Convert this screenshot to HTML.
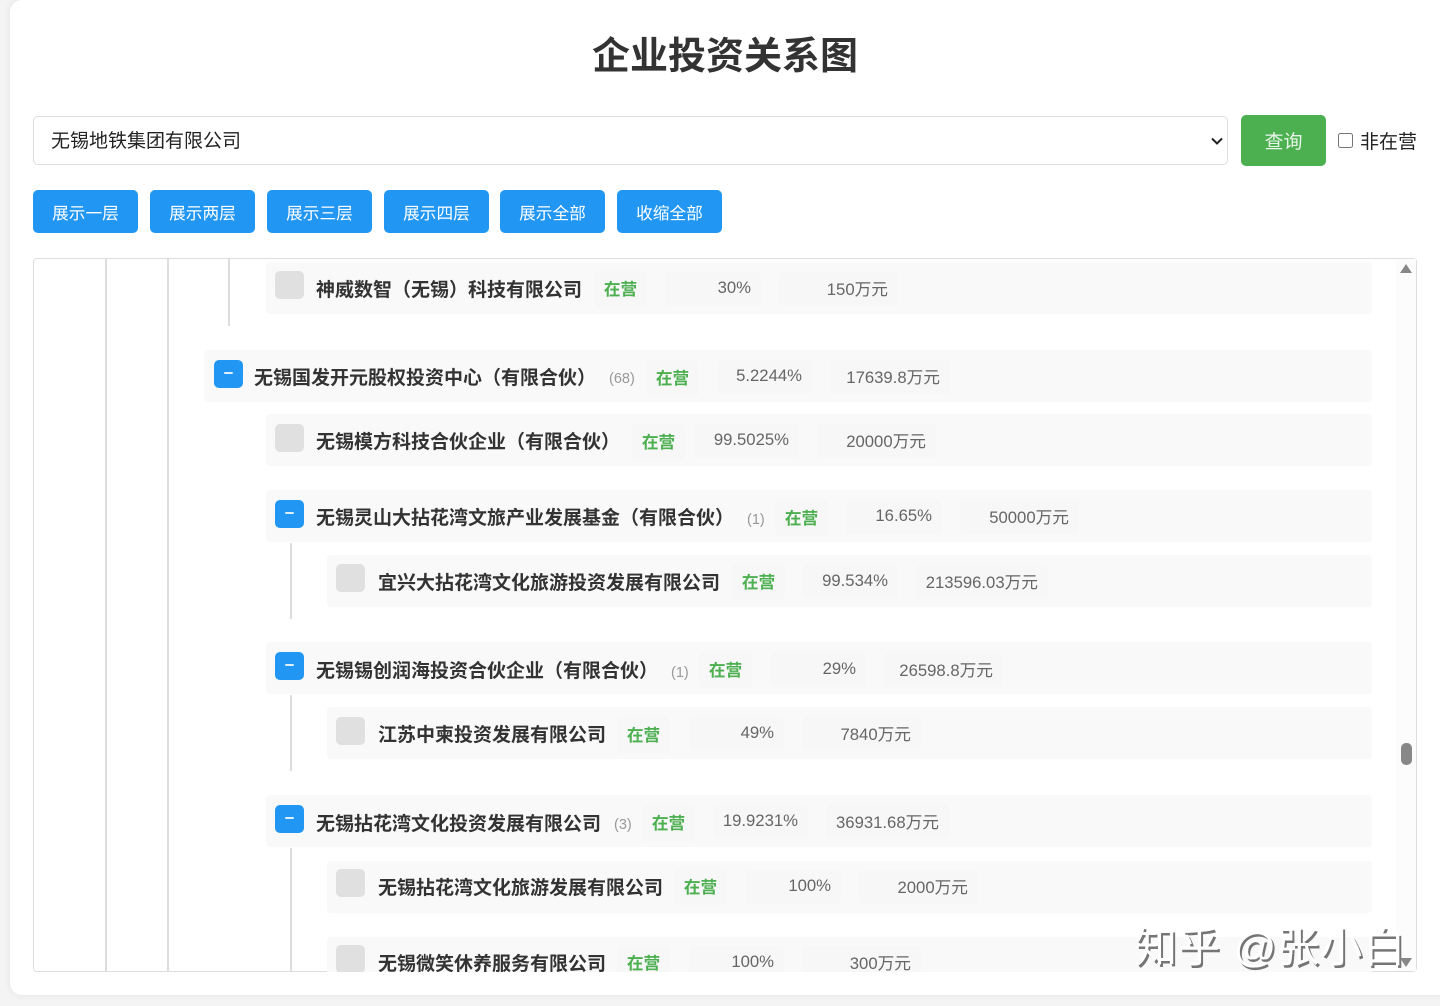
<!DOCTYPE html>
<html lang="zh-CN"><head><meta charset="utf-8"><title>企业投资关系图</title>
<style>
*{box-sizing:border-box}
html,body{margin:0;padding:0;width:1440px;height:1006px;overflow:hidden;background:#f4f4f4;font-family:"Liberation Sans","Noto Sans CJK SC",sans-serif}
.card{position:absolute;left:10px;top:0;width:1440px;height:995px;background:#fff;border-radius:12px;box-shadow:0 0 8px rgba(0,0,0,.08)}
.abs{position:absolute;white-space:nowrap}
h1{position:absolute;left:425px;width:600px;top:32px;margin:0;text-align:center;font-size:38px;line-height:50px;font-weight:700;color:#333}
select{position:absolute;left:33px;top:116px;width:1195px;height:49px;border:1px solid #ddd;border-radius:5px;background:#fff;font:19px "Liberation Sans","Noto Sans CJK SC",sans-serif;color:#222;padding:2px 17px 0;appearance:none;-webkit-appearance:none}
.go{left:1241px;top:115px;width:85px;height:51px;background:#4caf50;color:#e8f5e9;border-radius:5px;text-align:center;font-size:19px;line-height:56px}
.btn{top:190px;width:105px;height:43px;background:#2196f3;color:#fff;border-radius:5px;text-align:center;font-size:16.7px;line-height:47px}
.box{position:absolute;left:33px;top:258px;width:1384px;height:714px;border:1px solid #ddd;border-radius:4px}
.sb{position:absolute;left:1396px;top:259px;width:20px;height:712px;background:#fcfcfc}
.tree{position:absolute;left:0;top:0;width:1440px;height:1006px;clip-path:inset(259px 44px 34px 34px)}
.v{position:absolute;width:2px;background:#ddd}
.bar{position:absolute;height:52px;right:68px;background:#f9f9f9;border-radius:4px}
.ic{position:absolute;width:29px;height:28px;border-radius:5px;background:#e0e0e0}
.ic.b{background:#2196f3}
.ic.b i{position:absolute;left:10px;top:12px;width:9px;height:2px;background:#dff0fd;border-radius:1px}
.n{position:absolute;white-space:nowrap;font-size:19px;font-weight:700;color:#333;line-height:26px;margin-top:2px}
.c{position:absolute;white-space:nowrap;font-size:14.5px;color:#999;line-height:20px}
.s{position:absolute;height:36px;width:53px;background:#f7f7f7;border-radius:4px;color:#4caf50;font-weight:700;font-size:16.7px;line-height:38px;text-align:center}
.p,.m{position:absolute;height:34px;background:#f7f7f7;border-radius:4px;color:#666;font-size:16.7px;text-align:right;padding-right:10px;white-space:nowrap}
.p{line-height:31px}.m{line-height:36px}
.wm{left:1135px;top:918px;font-size:42px;line-height:60px;color:#fff;text-shadow:2px 2.5px 0 #757575;letter-spacing:1px}
</style></head><body>
<div class="card"></div>
<h1>企业投资关系图</h1>
<select><option>无锡地铁集团有限公司</option></select>
<svg class="abs" style="left:1210px;top:136px" width="14" height="10"><path d="M2 2.5 L7 7.5 L12 2.5" fill="none" stroke="#222" stroke-width="2"/></svg>
<div class="abs go">查询</div>
<input type="checkbox" style="position:absolute;left:1338px;top:133px;width:15px;height:15px;margin:0">
<div class="abs" style="left:1360px;top:129px;font-size:19px;line-height:28px;color:#222">非在营</div>
<div class="abs btn" style="left:33px">展示一层</div>
<div class="abs btn" style="left:150px">展示两层</div>
<div class="abs btn" style="left:267px">展示三层</div>
<div class="abs btn" style="left:384px">展示四层</div>
<div class="abs btn" style="left:500px">展示全部</div>
<div class="abs btn" style="left:617px">收缩全部</div>
<div class="box"></div>
<div class="sb"></div>
<div class="tree">
<div class="v" style="left:105px;top:258px;height:714px"></div>
<div class="v" style="left:167px;top:258px;height:714px"></div>
<div class="v" style="left:228px;top:258px;height:68px"></div>
<div class="v" style="left:290px;top:543px;height:76px"></div>
<div class="v" style="left:290px;top:695px;height:76px"></div>
<div class="v" style="left:290px;top:848px;height:124px"></div>

<div class="bar" style="left:266px;top:262px"></div>
<div class="ic" style="left:275px;top:271px"></div>
<div class="n" style="left:316px;top:276px">神威数智（无锡）科技有限公司</div>
<div class="s" style="left:594px;top:271px">在营</div>
<div class="p" style="left:665px;top:272px;width:96px">30%</div>
<div class="m" style="left:779px;top:272px;width:119px">150万元</div>

<div class="bar" style="left:204px;top:350px"></div>
<div class="ic b" style="left:214px;top:360px"><i></i></div>
<div class="n" style="left:254px;top:364px">无锡国发开元股权投资中心（有限合伙）</div>
<div class="c" style="left:609px;top:369px">(68)</div>
<div class="s" style="left:646px;top:360px">在营</div>
<div class="p" style="left:717px;top:360px;width:95px">5.2244%</div>
<div class="m" style="left:830px;top:360px;width:120px">17639.8万元</div>

<div class="bar" style="left:266px;top:414px"></div>
<div class="ic" style="left:275px;top:424px"></div>
<div class="n" style="left:316px;top:428px">无锡模方科技合伙企业（有限合伙）</div>
<div class="s" style="left:632px;top:424px">在营</div>
<div class="p" style="left:694px;top:424px;width:105px">99.5025%</div>
<div class="m" style="left:817px;top:424px;width:119px">20000万元</div>

<div class="bar" style="left:266px;top:490px"></div>
<div class="ic b" style="left:275px;top:500px"><i></i></div>
<div class="n" style="left:316px;top:504px">无锡灵山大拈花湾文旅产业发展基金（有限合伙）</div>
<div class="c" style="left:747px;top:510px">(1)</div>
<div class="s" style="left:775px;top:500px">在营</div>
<div class="p" style="left:846px;top:500px;width:96px">16.65%</div>
<div class="m" style="left:960px;top:500px;width:119px">50000万元</div>

<div class="bar" style="left:327px;top:555px"></div>
<div class="ic" style="left:336px;top:564px"></div>
<div class="n" style="left:378px;top:569px">宜兴大拈花湾文化旅游投资发展有限公司</div>
<div class="s" style="left:732px;top:564px">在营</div>
<div class="p" style="left:803px;top:565px;width:95px">99.534%</div>
<div class="m" style="left:916px;top:565px;width:132px">213596.03万元</div>

<div class="bar" style="left:266px;top:642px"></div>
<div class="ic b" style="left:275px;top:652px"><i></i></div>
<div class="n" style="left:316px;top:657px">无锡锡创润海投资合伙企业（有限合伙）</div>
<div class="c" style="left:671px;top:663px">(1)</div>
<div class="s" style="left:699px;top:652px">在营</div>
<div class="p" style="left:771px;top:653px;width:95px">29%</div>
<div class="m" style="left:884px;top:653px;width:119px">26598.8万元</div>

<div class="bar" style="left:327px;top:707px"></div>
<div class="ic" style="left:336px;top:717px"></div>
<div class="n" style="left:378px;top:721px">江苏中柬投资发展有限公司</div>
<div class="s" style="left:617px;top:717px">在营</div>
<div class="p" style="left:689px;top:717px;width:95px">49%</div>
<div class="m" style="left:802px;top:717px;width:119px">7840万元</div>

<div class="bar" style="left:266px;top:795px"></div>
<div class="ic b" style="left:275px;top:805px"><i></i></div>
<div class="n" style="left:316px;top:810px">无锡拈花湾文化投资发展有限公司</div>
<div class="c" style="left:614px;top:815px">(3)</div>
<div class="s" style="left:642px;top:805px">在营</div>
<div class="p" style="left:713px;top:805px;width:95px">19.9231%</div>
<div class="m" style="left:826px;top:805px;width:123px">36931.68万元</div>

<div class="bar" style="left:327px;top:861px"></div>
<div class="ic" style="left:336px;top:869px"></div>
<div class="n" style="left:378px;top:874px">无锡拈花湾文化旅游发展有限公司</div>
<div class="s" style="left:674px;top:869px">在营</div>
<div class="p" style="left:746px;top:870px;width:95px">100%</div>
<div class="m" style="left:859px;top:870px;width:119px">2000万元</div>

<div class="bar" style="left:327px;top:937px"></div>
<div class="ic" style="left:336px;top:945px"></div>
<div class="n" style="left:378px;top:950px">无锡微笑休养服务有限公司</div>
<div class="s" style="left:617px;top:945px">在营</div>
<div class="p" style="left:689px;top:946px;width:95px">100%</div>
<div class="m" style="left:802px;top:946px;width:119px">300万元</div>
</div>
<svg class="abs" style="left:1396px;top:259px" width="20" height="20"><path d="M4 14 L10 5 L16 14Z" fill="#888"/></svg>
<div class="abs" style="left:1401px;top:743px;width:11px;height:22px;background:#888;border-radius:5px"></div>
<div class="abs wm">知乎 @张小白</div>
<svg class="abs" style="left:1396px;top:952px" width="20" height="18"><path d="M4 6 L16 6 L10 15Z" fill="#888"/></svg>
</body></html>
